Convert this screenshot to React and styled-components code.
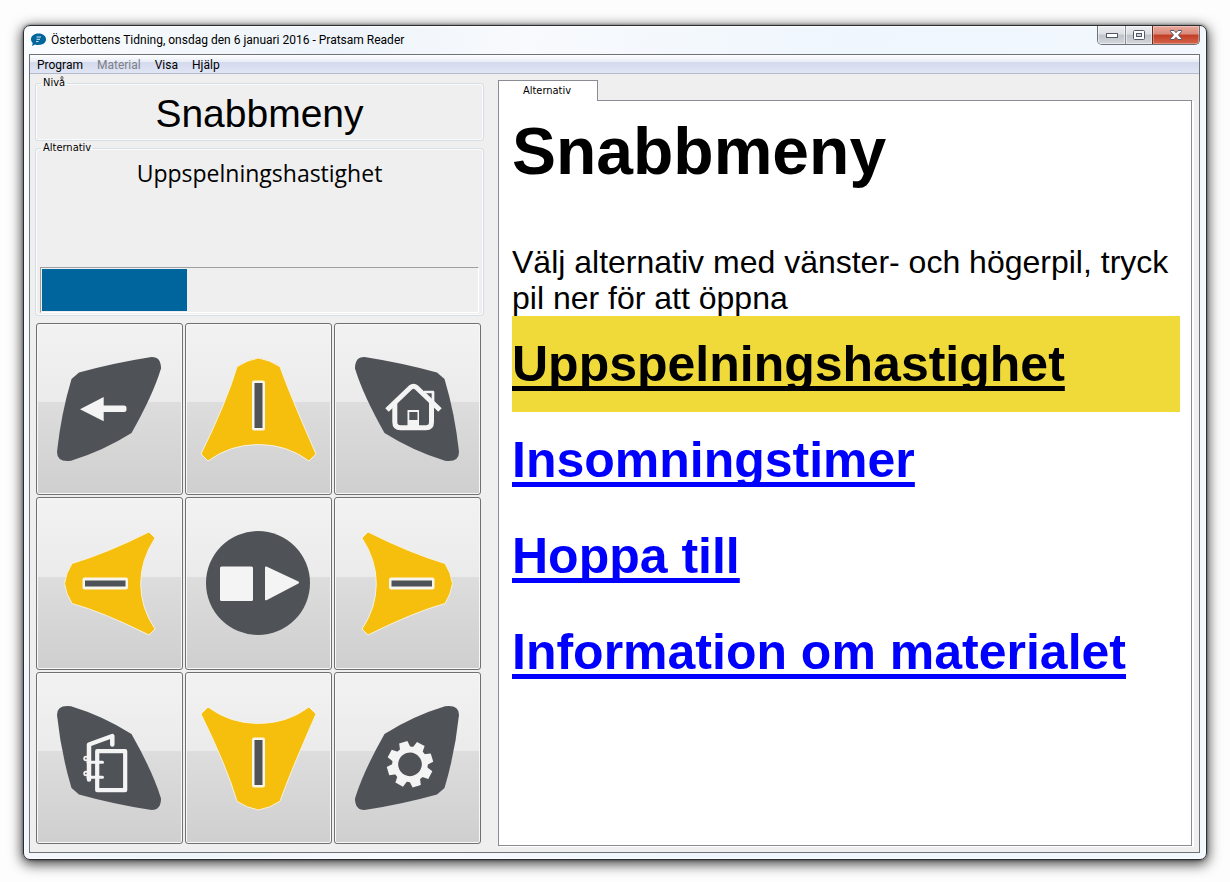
import React, { useState } from "react";
import styled, { createGlobalStyle, css } from "styled-components";

const GlobalStyle = createGlobalStyle`
  :root {
    --ui-font: Roboto, "Open Sans", sans-serif;
    --wide-font: "Open Sans", "Noto Sans", sans-serif;
    --small-font: "DejaVu Sans Condensed", "DejaVu Sans", sans-serif;
    --text-font: "Liberation Sans", Arial, sans-serif;
    --slate: #4f5257;
    --yellow: #f6be0d;
    --light: #f4f4f4;
    --blue: #00659c;
  }

  * {
    box-sizing: border-box;
  }

  body {
    margin: 0;
    background-color: #fdfdfd;
    color: #000;
    font-family: var(--ui-font);
  }
`;

const Page = styled.div`
  min-height: 100vh;
  padding: 25px 23px 22px;
  display: flex;
`;

const Window = styled.div`
  flex: 1;
  min-width: 0;
  display: flex;
  flex-flow: column nowrap;
  padding: 0 6px 6px 5px;
  border: 1px solid #2b2f33;
  border-radius: 7px;
  background: linear-gradient(
    100deg,
    #fbfdfe 0,
    #f4f8fc 10%,
    #eef4fa 24%,
    #f8fafd 38%,
    #eff6fd 62%,
    #f3f8fd 100%
  );
  box-shadow: inset 0 0 0 1px #fbfdff, 0 0 3px rgba(0, 0, 0, 0.5),
    0 3px 13px 1px rgba(0, 0, 0, 0.75);
`;

const TitleBar = styled.header`
  height: 28px;
  display: flex;
  justify-content: space-between;
  align-items: flex-start;
`;

const Title = styled.h1`
  margin: 0;
  padding: 4px 0 0 2px;
  display: flex;
  align-items: center;
  gap: 5px;
  font-size: 12px;
  line-height: 20px;
  font-weight: 400;
`;

const Controls = styled.div`
  height: 19px;
  display: flex;
  border: 1px solid #6d7178;
  border-top: 0;
  border-radius: 0 0 5px 5px;
  overflow: hidden;
`;

const Control = styled.button`
  width: ${(props) => (props.$close ? 47 : 27)}px;
  padding: 0;
  display: flex;
  justify-content: center;
  align-items: center;
  border: 0;
  border-left: ${(props) => (props.$first ? 0 : "1px solid #8b9098")};
  background: linear-gradient(
    #eceef1 0,
    #dcdfe3 45%,
    #bfc4ca 50%,
    #d3d7dc 100%
  );
  box-shadow: inset 0 0 0 1px rgba(255, 255, 255, 0.5);

  ${(props) =>
    props.$close &&
    css`
      border-left-color: #6b2a22;
      background: linear-gradient(
        #e9a99c 0,
        #d98a7b 45%,
        #c23d24 50%,
        #d5654a 100%
      );
      box-shadow: inset 0 0 0 1px rgba(255, 255, 255, 0.3);
    `}
`;

const Client = styled.div`
  flex: 1;
  display: flex;
  flex-flow: column nowrap;
  border: 1px solid #6f7378;
  background-color: #efefef;
`;

const MenuBar = styled.nav`
  height: 19px;
  padding: 0 1px;
  display: flex;
  gap: 2px;
  border-bottom: 1px solid #b4b9cc;
  background: linear-gradient(
    #ffffff 0,
    #e8ecf5 38%,
    #d4daed 42%,
    #e1e6f6 100%
  );
`;

const MenuItem = styled.button`
  padding: 1px 6px 0;
  border: 0;
  background: none;
  color: #000;
  font-family: var(--ui-font);
  font-size: 12px;
  line-height: 18px;

  &:disabled {
    color: #7e8087;
  }
`;

const Main = styled.main`
  flex: 1;
  padding: 2px 7px 6px 5px;
  display: grid;
  grid-template-columns: 449fr 694fr;
  gap: 14px;
`;

const Side = styled.section`
  min-width: 0;
  display: flex;
  flex-flow: column nowrap;
`;

const Group = styled.fieldset`
  min-width: 0;
  margin: 0;
  padding: 0 4px 2px;
  border: 1px solid #d5dfe5;
  border-radius: 3px;
  box-shadow: inset 0 0 0 1px #fbfbfb;
`;

const Legend = styled.legend`
  margin-left: 1px;
  padding: 0 2px;
  font-family: var(--small-font);
  font-size: 11px;
  line-height: 14px;
`;

const Level = styled.p`
  margin: 0;
  text-align: center;
  font-family: var(--text-font);
  font-size: 39px;
  line-height: 48px;
`;

const Choice = styled.p`
  margin: 0 0 76px;
  text-align: center;
  font-family: var(--wide-font);
  font-size: 23px;
  line-height: 36px;
`;

const Progress = styled.div`
  height: 46px;
  padding: 1px;
  border: 1px solid;
  border-color: #a0a0a0 #fff #fff #a0a0a0;
`;

const Bar = styled.div`
  height: 42px;
  background-color: var(--blue);
`;

const Pad = styled.div`
  flex: 1;
  margin: 7px 3px 2px 1px;
  display: grid;
  grid-template-columns: repeat(3, 1fr);
  grid-auto-rows: 1fr;
  gap: 2px;
`;

const Key = styled.button`
  min-width: 0;
  padding: 0;
  display: flex;
  justify-content: center;
  align-items: center;
  border: 1px solid #707070;
  border-radius: 3px;
  background: linear-gradient(
    #f2f2f2 0,
    #ebebeb 46%,
    #dddddd 46%,
    #cfcfcf 100%
  );
  box-shadow: inset 0 0 0 1px #f8f8f8;
`;

const Reader = styled.section`
  min-width: 0;
  padding-top: 4px;
  display: flex;
  flex-flow: column nowrap;
`;

const Tab = styled.button`
  align-self: flex-start;
  width: 100px;
  height: 21px;
  margin-bottom: -1px;
  padding: 0 2px 1px 0;
  z-index: 1;
  border: 1px solid #898c95;
  border-bottom: 0;
  background-color: #fff;
  color: #000;
  font-family: var(--small-font);
  font-size: 11px;
`;

const Panel = styled.article`
  flex: 1;
  padding: 13px 11px 0 13px;
  border: 1px solid #898c95;
  background-color: #fff;
  box-shadow: 2px 1px 0 #fff;
  font-family: var(--text-font);
`;

const Heading = styled.h2`
  margin: 0;
  font-size: 66px;
  line-height: 75px;
  font-weight: 700;
`;

const Intro = styled.p`
  margin: 55px 0 0;
  font-size: 32px;
  line-height: 36px;
`;

const Options = styled.ul`
  margin: 0;
  padding: 0;
  list-style: none;
`;

const Option = styled.li`
  padding-top: 1px;
  background-color: ${(props) => (props.$selected ? "#f0da3a" : "transparent")};
`;

const OptionLink = styled.a`
  color: ${(props) => (props.$selected ? "#000" : "#0000ff")};
  font-size: 50px;
  line-height: 95px;
  font-weight: 700;
  text-decoration: underline;
  text-decoration-thickness: 5px;
  text-decoration-skip-ink: none;
  text-underline-offset: 5px;
`;

const Icon = styled.svg`
  width: 117px;
  height: 106px;
  flex: none;
`;

const BLADE =
  "M28 16.500 Q62 7 99 1.200 Q110 0 110 12.500 Q102 39 80.500 77 Q52 95 20 104.700 Q6 106.500 6 96 Q10 58 20.500 23 Z";

const blades = {
  back: undefined,
  home: "translate(116 0) scale(-1 1)",
  library: "translate(0 106) scale(1 -1)",
  settings: "translate(116 106) scale(-1 -1)",
};

const Blade = ({ kind, children }) => (
  <Icon viewBox="0 0 117 106" aria-hidden="true">
    <path d={BLADE} fill="var(--slate)" transform={blades[kind]} />
    {children}
  </Icon>
);

const UpDown = ({ down }) => (
  <Icon viewBox="0 0 117 106" aria-hidden="true">
    <g transform={down ? "translate(0 107) scale(1 -1)" : undefined}>
      <path
        d="M58.500 2 Q70 4 80 10.700 Q90 39 116 98 L109 105 Q87 88.500 58.500 88.500 Q30 88.500 8 105 L1 98 Q27 45 37 10.700 Q47 4 58.500 2 Z"
        fill="var(--yellow)"
        stroke="#f7f2df"
      />
      <rect x="52" y="24.500" width="13" height="50" rx="2" fill="#f7f5ec" />
      <rect x="54.500" y="27" width="8" height="45" fill="var(--slate)" />
    </g>
  </Icon>
);

const LeftRight = ({ right }) => (
  <Icon viewBox="0 0 117 106" aria-hidden="true">
    <g transform={right ? "translate(117 0) scale(-1 1)" : undefined}>
      <path
        d="M98 2 L104 8 Q89.700 30 89.700 53.500 Q89.700 78 104 99 L98 105 Q52 82 21 73.500 Q15 64 13.500 53.500 Q15 43 21 33.500 Q56 23 98 2 Z"
        fill="var(--yellow)"
        stroke="#f7f2df"
      />
      <rect x="31.500" y="47.500" width="45.500" height="12" rx="2" fill="#f7f5ec" />
      <rect x="34" y="50.500" width="40.500" height="6" fill="var(--slate)" />
    </g>
  </Icon>
);

const BackIcon = () => (
  <Blade kind="back">
    <path
      d="M29 53.300 L52.700 41 V49.500 H73 Q75.500 49.500 75.500 52 V53.500 Q75.500 56 73 56 H52.700 V65.300 Z"
      fill="var(--light)"
    />
  </Blade>
);

const HomeIcon = () => (
  <Blade kind="home">
    <g fill="none" stroke="var(--light)" strokeLinejoin="round">
      <path d="M75 36 H84 V47" strokeWidth="2.700" />
      <path d="M77 38 L82 43" strokeWidth="1.500" />
      <path
        d="M38 54 L61.500 31.500 Q64.500 29 67.500 31.500 L91 54"
        strokeWidth="5"
      />
      <path
        d="M45.800 46 V66 Q45.800 71.700 51.500 71.700 H77 Q82.500 71.700 82.500 66 V46"
        strokeWidth="5"
      />
    </g>
    <rect x="58.500" y="54" width="11.500" height="18" fill="var(--light)" />
    <rect x="60.300" y="56" width="8.200" height="8" fill="var(--slate)" />
  </Blade>
);

const PlayIcon = () => (
  <Icon viewBox="0 0 117 106" aria-hidden="true">
    <circle cx="58" cy="53" r="52" fill="var(--slate)" />
    <rect x="20" y="36.500" width="33" height="34.500" rx="1.500" fill="var(--light)" />
    <path
      d="M66 37.500 L98 52.500 L66 69.300 Z"
      fill="var(--light)"
      stroke="var(--light)"
      strokeWidth="2"
      strokeLinejoin="round"
    />
  </Icon>
);

const LibraryIcon = () => (
  <Blade kind="library">
    <g fill="none" stroke="var(--light)" strokeLinejoin="round" strokeLinecap="round">
      <path d="M38 74.500 V39.500 L61.300 31 V39.500" strokeWidth="4.500" />
      <rect x="46.200" y="46.200" width="28" height="39" strokeWidth="4.200" />
      <path d="M37 57.300 H51.500 M37 72.300 H51.500" strokeWidth="3" />
      <circle cx="35" cy="53.500" r="1.800" strokeWidth="1.800" />
      <circle cx="35" cy="68.500" r="1.800" strokeWidth="1.800" />
    </g>
  </Blade>
);

const SettingsIcon = () => (
  <Blade kind="settings">
    <g transform="translate(61 59.300) rotate(-17)">
      <circle r="14.800" fill="none" stroke="var(--light)" strokeWidth="6" />
      {[0, 45, 90, 135, 180, 225, 270, 315].map((angle) => (
        <path
          key={angle}
          d="M16 -5.500 L23 -4.300 V4.300 L16 5.500 Z"
          fill="var(--light)"
          transform={`rotate(${angle})`}
        />
      ))}
    </g>
  </Blade>
);

const Logo = () => (
  <svg width="15" height="14" viewBox="0 0 15 14" aria-hidden="true">
    <path
      d="M7.500 0.500 C12 0.500 15 3 15 6.300 C15 9.800 12 12 7.500 12 C6 12 5 11.800 4 11.400 L1 13 L1.700 9.900 C0.500 9 0 7.800 0 6.300 C0 3 3 0.500 7.500 0.500 Z"
      fill="var(--blue)"
    />
    <path d="M5.500 4 H10 M5.500 6.300 H9 M5 8.600 H7.500" stroke="#d5e8f3" fill="none" />
  </svg>
);

const keys = [
  { label: "Tillbaka", icon: <BackIcon /> },
  { label: "Upp", icon: <UpDown /> },
  { label: "Hem", icon: <HomeIcon /> },
  { label: "Vänster", icon: <LeftRight /> },
  { label: "Spela", icon: <PlayIcon /> },
  { label: "Höger", icon: <LeftRight right /> },
  { label: "Bibliotek", icon: <LibraryIcon /> },
  { label: "Ner", icon: <UpDown down /> },
  { label: "Inställningar", icon: <SettingsIcon /> },
];

const options = [
  "Uppspelningshastighet",
  "Insomningstimer",
  "Hoppa till",
  "Information om materialet",
];

export default () => {
  const [selected, setSelected] = useState(0);

  const select = (e, index) => {
    e.preventDefault();
    setSelected(index);
  };

  return (
    <Page>
      <GlobalStyle />
      <Window>
        <TitleBar>
          <Title>
            <Logo />
            Österbottens Tidning, onsdag den 6 januari 2016 - Pratsam Reader
          </Title>
          <Controls>
            <Control $first aria-label="Minimera">
              <svg width="12" height="5" viewBox="0 0 12 5">
                <rect x="0.500" y="0.500" width="11" height="4" fill="#fff" stroke="#555869" />
              </svg>
            </Control>
            <Control aria-label="Maximera">
              <svg width="12" height="10" viewBox="0 0 12 10">
                <rect x="0.500" y="0.500" width="11" height="9" rx="1" fill="#fff" stroke="#555869" />
                <rect x="3.500" y="3.500" width="5" height="3" fill="#d0d4da" stroke="#555869" />
              </svg>
            </Control>
            <Control $close aria-label="Stäng">
              <svg width="12" height="10" viewBox="0 0 12 10">
                <path
                  d="M0.500 0.500 H4 L6 2.700 L8 0.500 H11.500 V1.500 L8.500 5 L11.500 8.500 V9.500 H8 L6 7.300 L4 9.500 H0.500 V8.500 L3.500 5 L0.500 1.500 Z"
                  fill="#fff"
                  stroke="#555869"
                />
              </svg>
            </Control>
          </Controls>
        </TitleBar>
        <Client>
          <MenuBar>
            <MenuItem>Program</MenuItem>
            <MenuItem disabled>Material</MenuItem>
            <MenuItem>Visa</MenuItem>
            <MenuItem>Hjälp</MenuItem>
          </MenuBar>
          <Main>
            <Side>
              <Group>
                <Legend>Nivå</Legend>
                <Level>Snabbmeny</Level>
              </Group>
              <Group>
                <Legend>Alternativ</Legend>
                <Choice>{options[selected]}</Choice>
                <Progress
                  role="progressbar"
                  aria-label="Alternativ"
                  aria-valuemin={0}
                  aria-valuemax={3}
                  aria-valuenow={1}
                >
                  <Bar style={{ width: `${100 / 3}%` }} />
                </Progress>
              </Group>
              <Pad>
                {keys.map(({ label, icon }) => (
                  <Key key={label} aria-label={label}>
                    {icon}
                  </Key>
                ))}
              </Pad>
            </Side>
            <Reader>
              <Tab>Alternativ</Tab>
              <Panel>
                <Heading>Snabbmeny</Heading>
                <Intro>
                  Välj alternativ med vänster- och högerpil, tryck pil ner för
                  att öppna
                </Intro>
                <Options>
                  {options.map((name, index) => (
                    <Option key={name} $selected={index === selected}>
                      <OptionLink
                        href="#"
                        $selected={index === selected}
                        onClick={(e) => select(e, index)}
                      >
                        {name}
                      </OptionLink>
                    </Option>
                  ))}
                </Options>
              </Panel>
            </Reader>
          </Main>
        </Client>
      </Window>
    </Page>
  );
};
